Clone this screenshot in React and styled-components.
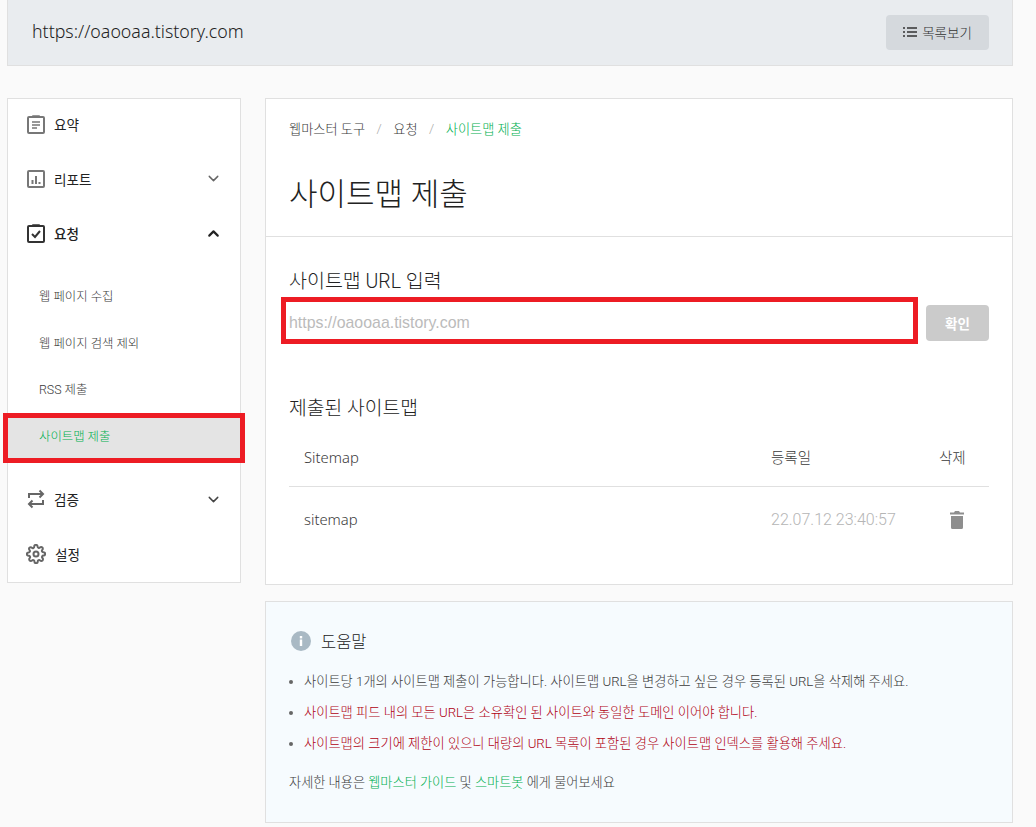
import styled, { createGlobalStyle } from "styled-components";
import { FiChevronDown, FiChevronUp } from "react-icons/fi";

const GlobalStyle = createGlobalStyle`
  * { box-sizing: border-box; }
  html, body { margin: 0; padding: 0; background: #fafafa; }
  body {
    height: 827px;
    overflow: hidden;
    font-family: Roboto, "Noto Sans CJK KR", sans-serif;
    color: #333;
  }
`;

const Page = styled.div`
  padding: 0 23px 0 7px;
  display: flex;
  flex-direction: column;
  gap: 32px;
`;
const TopBar = styled.header`
  height: 66px;
  background: #e9ecef;
  border: 1px solid #e0e0e0;
  border-top: none;
  display: flex;
  align-items: center;
  justify-content: space-between;
  padding: 0 23px 1px 24px;
`;
const SiteUrl = styled.span`
  font-family: "Noto Sans", sans-serif;
  font-size: 17.8px;
  font-weight: 300;
  color: #222;
  margin-bottom: 2px;
`;
const ListButton = styled.button`
  width: 103px;
  height: 35px;
  border: none;
  border-radius: 4px;
  background: #d5d9dd;
  display: flex;
  align-items: center;
  justify-content: center;
  gap: 5px;
  font: 300 13.5px "Noto Sans CJK KR", sans-serif;
  color: #333;
`;
const Content = styled.div`
  display: grid;
  grid-template-columns: 234px 748px;
  gap: 24px;
  align-items: start;
`;
const Side = styled.nav`
  background: #fff;
  border: 1px solid #e0e0e0;
  height: 485px;
  position: relative;
`;
const MenuRow = styled.div`
  height: 54.5px;
  display: flex;
  align-items: center;
  padding: 0 18px 4px 19px;
  gap: 9px;
  font-size: 13.6px;
  font-weight: ${(p) => (p.$on ? 500 : 400)};
  color: #222;
  & > svg:first-child { flex: none; }
`;
const MenuLabel = styled.span`
  flex: 1;
`;
const SubList = styled.div`
  padding-top: 10px;
  padding-bottom: 14.5px;
`;
const SubRow = styled.div`
  height: 46.7px;
  display: flex;
  align-items: center;
  padding-left: 31px;
  font-size: 12.4px;
  font-weight: 300;
  background: ${(p) => (p.$on ? "#e4e4e4" : "transparent")};
  color: ${(p) => (p.$on ? "#00b050" : "#3a3a3a")};
`;
const Main = styled.main`
  display: flex;
  flex-direction: column;
  gap: 16px;
`;
const Card = styled.section`
  background: #fff;
  border: 1px solid #e0e0e0;
  height: 487px;
`;
const CardHead = styled.div`
  height: 138px;
  padding: 19px 23px 0;
  border-bottom: 1px solid #e0e0e0;
`;
const Crumbs = styled.div`
  display: flex;
  align-items: center;
  font-size: 13.2px;
  font-weight: 300;
  height: 20px;
  color: #3a3a3a;
`;
const Slash = styled.span`
  color: #aaa;
  margin: 0 11.5px;
`;
const Current = styled.span`
  color: #00b050;
`;
const Title = styled.h1`
  margin: 36px 0 0;
  font-size: 31px;
  line-height: 42px;
  font-weight: 300;
  color: #222;
`;
const CardBody = styled.div`
  padding: 31px 23px 0;
`;
const SubTitle = styled.h2`
  margin: 0;
  font-size: 19.5px;
  line-height: 28px;
  font-weight: 300;
  color: #222;
`;
const InputRow = styled.div`
  display: flex;
  gap: 14px;
  margin-top: 9px;
  position: relative;
`;
const UrlInput = styled.input`
  flex: 1;
  height: 36px;
  border: none;
  outline: none;
  padding: 0;
  font: 400 15.9px "Liberation Sans", sans-serif;
  background: transparent;
  &::placeholder { color: #bbb; opacity: 1; }
`;
const Confirm = styled.button`
  width: 63px;
  height: 36px;
  border: none;
  border-radius: 4px;
  background: #cbcbcb;
  color: #fff;
  font: 700 13.5px "Noto Sans CJK KR", sans-serif;
`;
const Highlight = styled.div`
  position: absolute;
  border: 5px solid #ed1c24;
  pointer-events: none;
  ${(p) => p.$where}
`;
const Table = styled.div`
  margin-top: 54px;
`;
const TableTitle = styled(SubTitle)`
  font-size: 19.3px;
`;
const TableRow = styled.div`
  display: grid;
  grid-template-columns: 467px 168px 1fr;
  align-items: center;
  padding: ${(p) => (p.$line ? "4px 0 0 15px" : "0 0 0 15px")};
  height: ${(p) => p.$h}px;
  font-size: 14.5px;
  font-weight: 300;
  color: #3a3a3a;
  border-bottom: ${(p) => (p.$line ? "1px solid #e0e0e0" : "none")};
`;
const Latin = styled.span`
  font-family: "Noto Sans", sans-serif;
  font-weight: 300;
  font-size: 14.8px;
`;
const DateCell = styled.span`
  font-family: Roboto, sans-serif;
  font-weight: 300;
  font-size: 16px;
  color: #b5b5b5;
`;
const TrashCell = styled.span`
  justify-self: start;
  display: flex;
  padding: 2px 0 0 11px;
`;
const Help = styled.section`
  background: #f6fbfe;
  border: 1px solid #e0e0e0;
  height: 222px;
  padding: 23px 23px 0;
`;
const HelpHead = styled.div`
  display: flex;
  align-items: center;
  gap: 10px;
  padding-left: 2px;
  font-size: 16.5px;
  font-weight: 300;
  color: #222;
  height: 32px;
`;
const HelpList = styled.ul`
  margin: 9px 0 0;
  padding: 0 0 0 15px;
  list-style: disc;
`;
const HelpItem = styled.li`
  height: 31px;
  line-height: 31px;
  font-size: 13.27px;
  font-weight: 300;
  color: ${(p) => (p.$warn ? "#b00012" : "#3a3a3a")};
  &::marker { color: #666; }
`;
const HelpNote = styled.p`
  margin: 13px 0 0;
  font-size: 13.2px;
  font-weight: 300;
  color: #3a3a3a;
`;
const GreenLink = styled.span`
  color: #00b050;
`;

const ClipboardIcon = ({ active, children }) => (
  <svg width="18" height="20" viewBox="0 0 18 20" fill="none" stroke={active ? "#333" : "#777"} strokeWidth="2">
    <rect x="1" y="3" width="16" height="16" rx="1" />
    <path d="M6 3V2h6v1" strokeWidth="1.5" />
    {children}
  </svg>
);

const BarsIcon = () => (
  <svg width="18" height="18" viewBox="0 0 18 18" fill="none" stroke="#777" strokeWidth="2">
    <rect x="1" y="1" width="16" height="16" rx="1" />
    <path d="M5.5 14V10M9 14V6M12.5 14v-2" />
  </svg>
);

const SwapIcon = () => (
  <svg width="18" height="20" viewBox="0 0 18 20" fill="none" stroke="#666" strokeWidth="2">
    <path d="M2 9V5h14M12.5 1.5 16 5l-3.5 3.5M16 11v4H2M5.5 11.5 2 15l3.5 3.5" />
  </svg>
);

const GearIcon = () => (
  <svg width="20" height="20" viewBox="0 0 24 24" fill="none" stroke="#666" strokeWidth="2.4" style={{ marginLeft: -1 }}>
    <circle cx="12" cy="12" r="3" />
    <path d="M19.4 15a1.65 1.65 0 0 0 .33 1.82l.06.06a2 2 0 1 1-2.83 2.83l-.06-.06a1.65 1.65 0 0 0-2.8 1.17V21a2 2 0 1 1-4 0v-.09a1.65 1.65 0 0 0-2.8-1.17l-.06.06a2 2 0 1 1-2.83-2.83l.06-.06a1.65 1.65 0 0 0-1.17-2.8H3a2 2 0 1 1 0-4h.09a1.65 1.65 0 0 0 1.17-2.8l-.06-.06a2 2 0 1 1 2.83-2.83l.06.06a1.65 1.65 0 0 0 2.8-1.17V3a2 2 0 1 1 4 0v.09a1.65 1.65 0 0 0 2.8 1.17l.06-.06a2 2 0 1 1 2.83 2.83l-.06.06a1.65 1.65 0 0 0 1.17 2.8H21a2 2 0 1 1 0 4h-.09a1.65 1.65 0 0 0-1.51 1z" />
  </svg>
);

const ListIcon = () => (
  <svg width="14" height="12" viewBox="0 0 14 12" fill="none" stroke="#333" strokeWidth="1.4">
    <path d="M0 2h2M4 2h10M0 6h2M4 6h10M0 10h2M4 10h10" />
  </svg>
);

const TrashIcon = () => (
  <svg width="14" height="18" viewBox="0 0 14 18" fill="#8e8e8e">
    <path d="M5 0h4l1 1.5h4v2H0v-2h4zM1 5h12v11.5a1.5 1.5 0 0 1-1.5 1.5h-9A1.5 1.5 0 0 1 1 16.5z" />
  </svg>
);

const InfoIcon = () => (
  <svg width="20" height="20" viewBox="0 0 20 20">
    <circle cx="10" cy="10" r="10" fill="#a9b9c4" />
    <rect x="8.8" y="8.5" width="2.4" height="6.5" fill="#fff" />
    <rect x="8.8" y="5" width="2.4" height="2.4" fill="#fff" />
  </svg>
);

const subMenu = ["웹 페이지 수집", "웹 페이지 검색 제외", "RSS 제출", "사이트맵 제출"];

export default function App() {
  return (
    <>
      <GlobalStyle />
      <Page>
        <TopBar>
          <SiteUrl>https://oaooaa.tistory.com</SiteUrl>
          <ListButton>
            <ListIcon />
            목록보기
          </ListButton>
        </TopBar>
        <Content>
          <Side>
            <MenuRow>
              <ClipboardIcon>
                <path d="M5 8h8M5 11h8M5 14h5" strokeWidth="1.5" />
              </ClipboardIcon>
              <MenuLabel>요약</MenuLabel>
            </MenuRow>
            <MenuRow>
              <BarsIcon />
              <MenuLabel>리포트</MenuLabel>
              <FiChevronDown size={17} color="#666" />
            </MenuRow>
            <MenuRow $on>
              <ClipboardIcon active>
                <path d="m5 11 3 3 5-6" />
              </ClipboardIcon>
              <MenuLabel>요청</MenuLabel>
              <FiChevronUp size={17} color="#222" strokeWidth={3} />
            </MenuRow>
            <SubList>
              {subMenu.map((item, i) => (
                <SubRow key={item} $on={i === 3}>
                  {item}
                </SubRow>
              ))}
            </SubList>
            <MenuRow>
              <SwapIcon />
              <MenuLabel>검증</MenuLabel>
              <FiChevronDown size={17} color="#444" />
            </MenuRow>
            <MenuRow>
              <GearIcon />
              <MenuLabel>설정</MenuLabel>
            </MenuRow>
            <Highlight $where="left: -5px; right: -5px; top: 314px; height: 50px;" />
          </Side>
          <Main>
            <Card>
              <CardHead>
                <Crumbs>
                  웹마스터 도구
                  <Slash>/</Slash>
                  요청
                  <Slash>/</Slash>
                  <Current>사이트맵 제출</Current>
                </Crumbs>
                <Title>사이트맵 제출</Title>
              </CardHead>
              <CardBody>
                <SubTitle>사이트맵 URL 입력</SubTitle>
                <InputRow>
                  <UrlInput placeholder="https://oaooaa.tistory.com" />
                  <Confirm>확인</Confirm>
                  <Highlight $where="left: -8px; width: 637px; top: -8px; height: 47px;" />
                </InputRow>
                <Table>
                  <TableTitle>제출된 사이트맵</TableTitle>
                  <TableRow $h={64} $line>
                    <Latin>Sitemap</Latin>
                    <span>등록일</span>
                    <span>삭제</span>
                  </TableRow>
                  <TableRow $h={64}>
                    <Latin>sitemap</Latin>
                    <DateCell>22.07.12 23:40:57</DateCell>
                    <TrashCell>
                      <TrashIcon />
                    </TrashCell>
                  </TableRow>
                </Table>
              </CardBody>
            </Card>
            <Help>
              <HelpHead>
                <InfoIcon />
                도움말
              </HelpHead>
              <HelpList>
                <HelpItem>사이트당 1개의 사이트맵 제출이 가능합니다. 사이트맵 URL을 변경하고 싶은 경우 등록된 URL을 삭제해 주세요.</HelpItem>
                <HelpItem $warn>사이트맵 피드 내의 모든 URL은 소유확인 된 사이트와 동일한 도메인 이어야 합니다.</HelpItem>
                <HelpItem $warn>사이트맵의 크기에 제한이 있으니 대량의 URL 목록이 포함된 경우 사이트맵 인덱스를 활용해 주세요.</HelpItem>
              </HelpList>
              <HelpNote>
                자세한 내용은 <GreenLink>웹마스터 가이드</GreenLink> 및 <GreenLink>스마트봇</GreenLink> 에게 물어보세요
              </HelpNote>
            </Help>
          </Main>
        </Content>
      </Page>
    </>
  );
}
